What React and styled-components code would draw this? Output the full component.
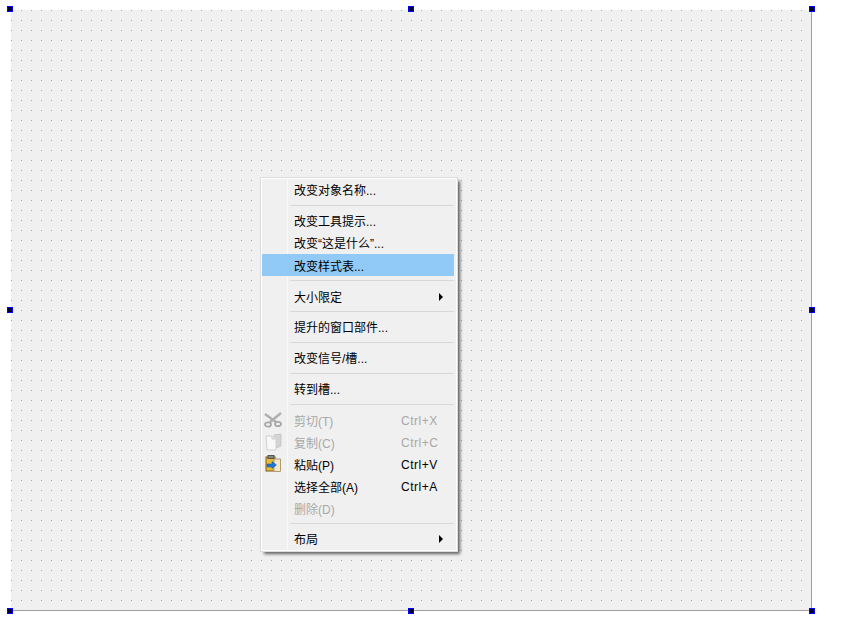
import styled, { createGlobalStyle } from 'styled-components';

const GlobalStyle = createGlobalStyle`
  html, body {
    margin: 0;
    padding: 0;
    background: #fff;
  }
`;

const Page = styled.div`
  width: 843px;
  height: 628px;
  padding: 10px 0 0 11px;
  box-sizing: border-box;
  overflow: hidden;
`;

const FormCanvas = styled.div`
  position: relative;
  width: 801px;
  height: 601px;
  box-sizing: border-box;
  border-right: 1px solid #a0a0a0;
  border-bottom: 1px solid #a0a0a0;
  background-color: #f0f0f0;
  background-image: conic-gradient(at 1px 1px, transparent 75%, #a8a8a8 0);
  background-size: 10px 10px;
`;

const Handle = styled.div`
  position: absolute;
  left: ${({ $x }) => $x}px;
  top: ${({ $y }) => $y}px;
  width: 6px;
  height: 6px;
  box-sizing: border-box;
  border: 1px solid #0000ff;
  background: #000030;
`;

const Menu = styled.div`
  position: absolute;
  left: 250px;
  top: 168px;
  width: 196px;
  box-sizing: border-box;
  padding: 0 2px 0 0;
  display: flex;
  flex-direction: column;
  background: #f0f0f0;
  border: 1px solid #fff;
  outline: 1px solid #dcdcdc;
  box-shadow: 3px 3px 3px rgba(0, 0, 0, 0.6);
  font-family: "Liberation Sans", "Noto Sans CJK SC", sans-serif;
  font-size: 12px;
`;

const Gutter = styled.div`
  position: absolute;
  left: 25px;
  top: 0;
  bottom: 0;
  width: 1px;
  background: #f8f8f8;
`;

const Row = styled.div`
  position: relative;
  height: 22px;
  display: flex;
  align-items: center;
  padding: ${({ $low }) => ($low ? '1px 0 0 32px' : '0 0 1px 32px')};
  box-sizing: border-box;
  color: ${({ $disabled }) => ($disabled ? '#a8a8a8' : '#000')};
  background: ${({ $active }) => ($active ? '#91c9f7' : 'transparent')};
`;

const Label = styled.span`
  flex: 1;
  white-space: pre;
`;

const Shortcut = styled.span`
  width: 53px;
  font-size: 12px;
  letter-spacing: 0.5px;
`;

const Arrow = styled.span`
  width: 0;
  height: 0;
  margin-right: 11px;
  border-left: 4px solid #000;
  border-top: 4px solid transparent;
  border-bottom: 4px solid transparent;
`;

const Separator = styled.div`
  height: 1px;
  margin: 4px 0 4px 28px;
  background: #d7d7d7;
`;

const IconSlot = styled.span`
  position: absolute;
  left: 2px;
  top: 2px;
  width: 18px;
  height: 18px;
  display: flex;
`;

const ScissorsIcon = () => (
  <svg width="18" height="18" viewBox="0 0 18 18" fill="none">
    <path d="M1 3 L12 11 M17 2 L6 11" stroke="#b0b0b0" strokeWidth="2.6" />
    <ellipse cx="4" cy="13.5" rx="3" ry="2.2" stroke="#a8a8a8" strokeWidth="1.8" />
    <ellipse cx="14" cy="13" rx="3" ry="2.2" stroke="#a8a8a8" strokeWidth="1.8" />
  </svg>
);

const CopyIcon = () => (
  <svg width="18" height="18" viewBox="0 0 18 18">
    <path d="M10 2 L17 1 V13 L12 15 Z" fill="#d4d4d4" stroke="#c8c8c8" />
    <path d="M2 3 H8 L12 6 V17 H3 Z" fill="#f8f8f8" stroke="#d0d0d0" />
    <path d="M8 3 V6 H12" fill="#e4e4e4" stroke="#d0d0d0" />
  </svg>
);

const PasteIcon = () => (
  <svg width="18" height="18" viewBox="0 0 18 18">
    <rect x="2" y="2" width="9" height="14" fill="#e6bc3c" stroke="#7a5a10" />
    <rect x="4" y="0.5" width="6" height="3" fill="#8a8a7a" stroke="#555" />
    <path d="M10 4 H16.5 V16.5 H10 Z" fill="#f4e8cc" stroke="#b09a70" />
    <path d="M3 9 H8 V6.5 L12.5 10 L8 13.5 V12 H3 Z" fill="#1f78d8" stroke="#14508f" strokeWidth="0.5" />
  </svg>
);

const handles = [
  [-4, -4], [397, -4], [798, -4],
  [-4, 297], [798, 297],
  [-4, 598], [397, 598], [798, 598],
];

const App = () => {
  return (
    <Page>
      <GlobalStyle />
      <FormCanvas>
        {handles.map(([x, y]) => (
          <Handle key={`${x}-${y}`} $x={x} $y={y} />
        ))}
        <Menu>
          <Gutter />
          <Row><Label>改变对象名称...</Label></Row>
          <Separator />
          <Row><Label>改变工具提示...</Label></Row>
          <Row><Label>改变“这是什么”...</Label></Row>
          <Row $active $low><Label>改变样式表...</Label></Row>
          <Separator />
          <Row $low><Label>大小限定</Label><Arrow /></Row>
          <Separator />
          <Row><Label>提升的窗口部件...</Label></Row>
          <Separator />
          <Row><Label>改变信号/槽...</Label></Row>
          <Separator />
          <Row><Label>转到槽...</Label></Row>
          <Separator />
          <Row $disabled $low>
            <IconSlot><ScissorsIcon /></IconSlot>
            <Label>剪切(T)</Label><Shortcut>Ctrl+X</Shortcut>
          </Row>
          <Row $disabled $low>
            <IconSlot><CopyIcon /></IconSlot>
            <Label>复制(C)</Label><Shortcut>Ctrl+C</Shortcut>
          </Row>
          <Row $low>
            <IconSlot><PasteIcon /></IconSlot>
            <Label>粘贴(P)</Label><Shortcut>Ctrl+V</Shortcut>
          </Row>
          <Row $low><Label>选择全部(A)</Label><Shortcut>Ctrl+A</Shortcut></Row>
          <Row $disabled $low><Label>删除(D)</Label></Row>
          <Separator />
          <Row><Label>布局</Label><Arrow /></Row>
        </Menu>
      </FormCanvas>
    </Page>
  );
};

export default App;
